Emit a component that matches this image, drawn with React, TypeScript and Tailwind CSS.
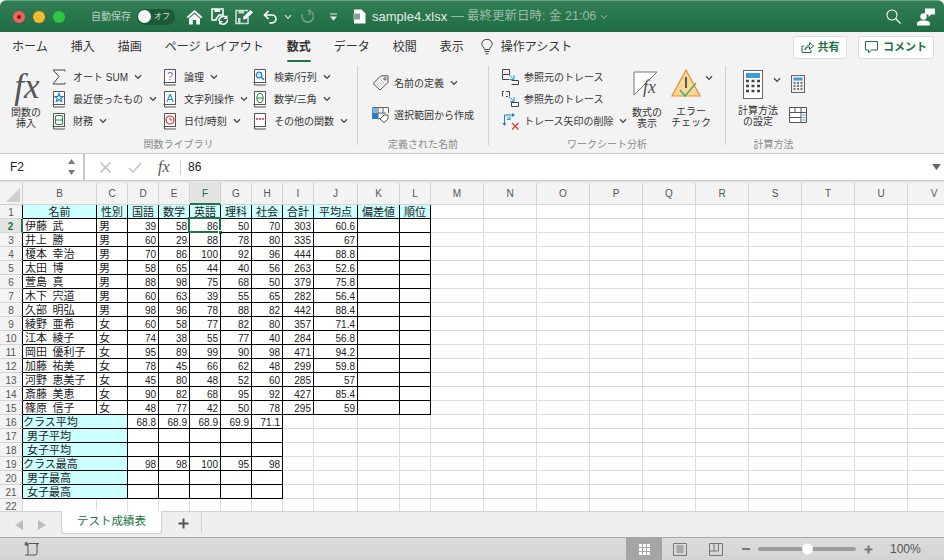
import React from "react";

const W = [23, 74, 31, 31, 31, 31, 31, 31, 31, 44, 42, 31, 53, 53, 53, 53, 53, 53, 53, 53, 53, 53];
const COLS = ["B", "C", "D", "E", "F", "G", "H", "I", "J", "K", "L", "M", "N", "O", "P", "Q", "R", "S", "T", "U", "V"];

const ROWS: (string | number)[][] = [
  ["伊藤\u2002武", "男", 39, 58, 86, 50, 70, 303, 60.6],
  ["井上\u2002勝", "男", 60, 29, 88, 78, 80, 335, 67],
  ["榎本\u2002幸治", "男", 70, 86, 100, 92, 96, 444, 88.8],
  ["太田\u2002博", "男", 58, 65, 44, 40, 56, 263, 52.6],
  ["萱島\u2002真", "男", 88, 98, 75, 68, 50, 379, 75.8],
  ["木下\u2002宍道", "男", 60, 63, 39, 55, 65, 282, 56.4],
  ["久部\u2002明弘", "男", 98, 96, 78, 88, 82, 442, 88.4],
  ["綾野\u2002亜希", "女", 60, 58, 77, 82, 80, 357, 71.4],
  ["江本\u2002綾子", "女", 74, 38, 55, 77, 40, 284, 56.8],
  ["岡田\u2002優利子", "女", 95, 89, 99, 90, 98, 471, 94.2],
  ["加藤\u2002祐美", "女", 78, 45, 66, 62, 48, 299, 59.8],
  ["河野\u2002恵美子", "女", 45, 80, 48, 52, 60, 285, 57],
  ["斎藤\u2002美恵", "女", 90, 82, 68, 95, 92, 427, 85.4],
  ["篠原\u2002信子", "女", 48, 77, 42, 50, 78, 295, 59],
];
const SUMMARY: [string, boolean, string[]][] = [
  ["クラス平均", false, ["68.8", "68.9", "68.9", "69.9", "71.1"]],
  ["男子平均", true, ["", "", "", "", ""]],
  ["女子平均", true, ["", "", "", "", ""]],
  ["クラス最高", false, ["98", "98", "100", "95", "98"]],
  ["男子最高", true, ["", "", "", "", ""]],
  ["女子最高", true, ["", "", "", "", ""]],
];
const HEADS = ["名前", "性別", "国語", "数学", "英語", "理科", "社会", "合計", "平均点", "偏差値", "順位"];

const GRID = "border-r border-b border-[#dcdcdc]";
const BLK = "border-r border-b border-black";

function Chev({ className = "" }: { className?: string }) {
  return (
    <svg width="8" height="6" viewBox="0 0 8 6" className={className}>
      <path d="M1 1.2 L4 4.4 L7 1.2" fill="none" stroke="#444" strokeWidth="1.3" />
    </svg>
  );
}

function Book({ children }: { children: React.ReactNode }) {
  return (
    <svg width="14" height="18" viewBox="0 0 14 18" className="shrink-0">
      <path d="M1.5 14.5 V1.5 H12.5 V14.5" fill="#fff" stroke="#555" strokeWidth="1" />
      <path d="M0.5 14.5 H13 M1.5 14.5 V17 H12.5 V16.5" fill="none" stroke="#555" strokeWidth="1" />
      {children}
    </svg>
  );
}

const IC = {
  sum: (
    <svg width="14" height="16" viewBox="0 0 14 16" className="shrink-0">
      <path d="M13 2.5 V1 H1 L7 7.5 L1 15 H13 V13.5" fill="none" stroke="#444" strokeWidth="1" />
    </svg>
  ),
  star: (
    <Book>
      <path d="M7 3.5 L8.1 6.4 L11.2 6.5 L8.8 8.4 L9.6 11.4 L7 9.7 L4.4 11.4 L5.2 8.4 L2.8 6.5 L5.9 6.4 Z" fill="none" stroke="#1f7fd0" strokeWidth="1.2" />
    </Book>
  ),
  fin: (
    <Book>
      <rect x="3.5" y="3.5" width="7" height="9" rx="1.5" fill="none" stroke="#2e8b4a" strokeWidth="1.2" />
      <path d="M3.5 8 H10.5" stroke="#2e8b4a" strokeWidth="1" />
    </Book>
  ),
  logic: (
    <Book>
      <text x="7" y="11.5" textAnchor="middle" fontSize="11" fill="#a04bc0" fontFamily="Liberation Sans">?</text>
    </Book>
  ),
  text: (
    <Book>
      <text x="7" y="12" textAnchor="middle" fontSize="11" fill="#1f7fd0" fontFamily="Liberation Sans">A</text>
    </Book>
  ),
  date: (
    <Book>
      <circle cx="7" cy="8" r="4" fill="none" stroke="#d8322c" strokeWidth="1.2" />
      <path d="M7 5.5 V8 H9.5" fill="none" stroke="#d8322c" strokeWidth="1" />
    </Book>
  ),
  find: (
    <Book>
      <circle cx="6" cy="7" r="2.8" fill="#cfe6f7" stroke="#1f7fd0" strokeWidth="1.2" />
      <path d="M8 9 L11 12" stroke="#1f7fd0" strokeWidth="1.4" />
    </Book>
  ),
  math: (
    <Book>
      <ellipse cx="7" cy="8" rx="3.2" ry="4.6" fill="none" stroke="#2e8b4a" strokeWidth="1.1" />
      <path d="M4 8 H10" stroke="#2e8b4a" strokeWidth="1" />
    </Book>
  ),
  more: (
    <Book>
      <path d="M3 7 H11" stroke="#d8322c" strokeWidth="1.6" strokeDasharray="2 1" />
    </Book>
  ),
};

function Item({ icon, label }: { icon: React.ReactNode; label: string }) {
  return (
    <div className="flex h-[22px] items-center">
      <span className="flex w-[14px] shrink-0 justify-center">{icon}</span>
      <span className="ml-[7px] whitespace-nowrap text-[10px] text-[#333]">{label}</span>
      <Chev className="ml-[6px]" />
    </div>
  );
}

function TraceItem({ kind, label, chev }: { kind: 0 | 1 | 2; label: string; chev?: boolean }) {
  return (
    <div className="flex h-[22px] items-center gap-[5px]">
      <Trace kind={kind} />
      <span className="whitespace-nowrap text-[10px] text-[#333]">{label}</span>
      {chev && <Chev />}
    </div>
  );
}

function Label({ children }: { children: React.ReactNode }) {
  return <div className="h-[21px] pt-[3px] text-center text-[10px] leading-[20px] text-[#8a8a8a]">{children}</div>;
}

function Sep() {
  return <div className="mt-[4px] mb-[8px] w-px shrink-0 bg-[#d0d0d0]" />;
}

function Trace({ kind }: { kind: 0 | 1 | 2 }) {
  if (kind === 2)
    return (
      <svg width="17" height="18" viewBox="0 0 17 18" className="shrink-0">
        <path d="M2.5 13 V3 H11.5" fill="none" stroke="#1f7fd0" strokeWidth="1" />
        <path d="M0.5 11 L2.5 14 L4.5 11 Z M10 1 L13 3 L10 5 Z" fill="#1f7fd0" />
        <path d="M5 4.5 L8 7.5 M8 4.5 V7.5 H5" fill="none" stroke="#1f9ad8" strokeWidth="1" />
        <path d="M10 11 L16.5 17.5 M16.5 11 L10 17.5" stroke="#e23a36" strokeWidth="1.2" />
      </svg>
    );
  return (
    <svg width="17" height="16" viewBox="0 0 17 16" className="shrink-0">
      <path d={kind === 0 ? "M0.5 0.5 H7.5 V5.5 H0.5 Z M0.5 5.5 V10.5 H7.5" : "M0.5 5.5 V0.5 H2 M4 0.5 H7.5 V5.5 M6 5.5 H4"} fill="none" stroke="#444" strokeWidth="1" />
      <path d="M9.5 11.5 H16.5 V15.5 H9.5" fill={kind === 0 ? "none" : "#fff"} stroke="#444" strokeWidth="1" />
      {kind === 1 && <path d="M9.5 11.5 V15.5" stroke="#444" strokeWidth="1" />}
      <path d="M7 6 L11 9.5" stroke="#1f9ad8" strokeWidth="1" />
      <path d="M12 6 V10.5 H8" fill="none" stroke="#1f9ad8" strokeWidth="1" />
    </svg>
  );
}

export default function App() {
  return (
    <div className="flex h-[560px] w-[944px] flex-col overflow-hidden bg-white text-[#222]" style={{ fontFamily: '"Liberation Sans", "Noto Sans CJK JP", sans-serif' }}>
      {/* title bar */}
      <div className="flex h-[32px] shrink-0 items-center rounded-t-[6px] border-t border-[#6fa78a] bg-gradient-to-b from-[#327f56] to-[#1f6b42] text-white">
        <div className="ml-[13px] flex gap-[8px]">
          <span className="flex h-[12px] w-[12px] items-center justify-center rounded-full bg-[#f6605a]"><span className="h-[4px] w-[4px] rounded-full bg-[#7d1a14]" /></span>
          <span className="h-[12px] w-[12px] rounded-full bg-[#f8b92e]" />
          <span className="h-[12px] w-[12px] rounded-full bg-[#2fc644]" />
        </div>
        <span className="ml-[26px] w-[40px] whitespace-nowrap text-[10px] text-[#b9d3c5]">自動保存</span>
        <div className="ml-[6px] flex h-[16px] w-[38px] items-center rounded-full bg-[#1d5a38]">
          <span className="ml-[1px] h-[13px] w-[13px] rounded-full bg-white" />
          <span className="ml-[3px] text-[8px] text-[#d5e3db]">オフ</span>
        </div>
        <svg width="17" height="16" viewBox="0 0 17 16" className="ml-[11px]">
          <path d="M0.5 8 L8.5 1 L16.5 8 L15 9.2 L8.5 3.6 L2 9.2 Z" fill="#fff" />
          <path d="M3 9.5 L8.5 5 L14 9.5 V15.5 H10.2 V11 H6.8 V15.5 H3 Z" fill="#fff" />
        </svg>
        <svg width="18" height="17" viewBox="0 0 18 17" className="ml-[8px]">
          <path d="M1 1 H12 V7 H8 L5 11 V12 H1 Z" fill="none" stroke="#fff" strokeWidth="1.5" />
          <path d="M3.5 1 H9 V4 H3.5 Z" fill="#fff" />
          <path d="M8 13 A4.5 4.5 0 0 1 15.5 9.5 M16.5 11.5 A4.5 4.5 0 0 1 9 15" fill="none" stroke="#fff" strokeWidth="1.5" />
          <path d="M16.5 7 V11 H12.5 Z M8 17 V13 H12 Z" fill="#fff" />
        </svg>
        <svg width="19" height="16" viewBox="0 0 19 16" className="ml-[6px]">
          <path d="M13 8 V14.5 H1 V1.5 H13" fill="none" stroke="#c9ddd2" strokeWidth="1.6" />
          <path d="M3.5 1.5 H9 V4.5 H3.5 Z M3 9 H5.5 V14 H3 Z" fill="#c9ddd2" />
          <path d="M8 10.5 L8.5 7.5 L15.5 1 L18 3.5 L11 10 Z" fill="#fff" />
        </svg>
        <svg width="14" height="14" viewBox="0 0 14 14" className="ml-[9px]">
          <path d="M5.5 1 L1.5 5 L5.5 9" fill="none" stroke="#fff" strokeWidth="1.7" />
          <path d="M2 5 H9 A3.8 3.8 0 0 1 9 12.8 H6.5" fill="none" stroke="#fff" strokeWidth="1.7" />
        </svg>
        <svg width="8" height="6" viewBox="0 0 8 6" className="ml-[7px]">
          <path d="M1 1.2 L4 4.4 L7 1.2" fill="none" stroke="#d7e5dd" strokeWidth="1.2" />
        </svg>
        <svg width="14" height="15" viewBox="0 0 14 15" className="ml-[8px]">
          <path d="M7.5 1.5 A5.8 5.8 0 1 1 2.5 5" fill="none" stroke="#6a9f82" strokeWidth="1.7" />
          <path d="M9.5 0.5 V6" stroke="#6a9f82" strokeWidth="1.7" />
        </svg>
        <svg width="9" height="8" viewBox="0 0 9 8" className="ml-[15px]">
          <path d="M1 1 H8" stroke="#e8f0ec" strokeWidth="1" />
          <path d="M1 3.5 H8 L4.5 7.5 Z" fill="#e8f0ec" />
        </svg>
        <svg width="13" height="15" viewBox="0 0 13 15" className="ml-[15px]">
          <path d="M1 0.5 H8.5 L12.5 4.5 V14.5 H1 Z" fill="#fff" />
          <rect x="0" y="4.5" width="7" height="6" fill="#7ea892" />
        </svg>
        <span className="ml-[6px] whitespace-nowrap text-[13px] text-[#e4eee9]">sample4.xlsx</span>
        <span className="ml-[4px] whitespace-nowrap text-[12.5px] text-[#98bda9]">— 最終更新日時: 金 21:06</span>
        <svg width="8" height="6" viewBox="0 0 8 6" className="ml-[4px]">
          <path d="M1 1.2 L4 4.4 L7 1.2" fill="none" stroke="#98bda9" strokeWidth="1" />
        </svg>
        <div className="flex-1" />
        <svg width="15" height="15" viewBox="0 0 15 15" className="mr-[16px]">
          <circle cx="6" cy="6" r="5" fill="none" stroke="#fff" strokeWidth="1.1" />
          <path d="M9.5 9.5 L14.5 14.5" stroke="#fff" strokeWidth="1.2" />
        </svg>
        <svg width="18" height="18" viewBox="0 0 18 18" className="mr-[9px]">
          <path d="M8 0.5 H18 V6.5 H14 L11.5 9 V6.5 H8 Z" fill="#fff" />
          <circle cx="6.5" cy="8.5" r="3.2" fill="#fff" />
          <path d="M0 17.5 V15.5 C0 13 3.5 12.5 6.5 12.5 C9.5 12.5 13 13 13 15.5 V17.5 Z" fill="#fff" />
        </svg>
      </div>

      {/* tabs */}
      <div className="flex h-[30px] shrink-0 items-center gap-[23px] bg-[#f3f3f3] pr-[10px] pl-[12px] text-[12px] text-[#333]">
        <span>ホーム</span>
        <span>挿入</span>
        <span>描画</span>
        <span className="whitespace-nowrap">ページ レイアウト</span>
        <span className="relative font-bold">
          数式
          <span className="absolute -bottom-[6px] left-0 h-[2px] w-full rounded-full bg-[#217346]" />
        </span>
        <span>データ</span>
        <span>校閲</span>
        <span>表示</span>
        <span className="-ml-[6px] flex items-center gap-[8px]">
          <svg width="12" height="16" viewBox="0 0 12 16">
            <path d="M3.5 10.5 C3.5 8.5 0.8 7.5 0.8 4.8 A5.2 4.5 0 0 1 11.2 4.8 C11.2 7.5 8.5 8.5 8.5 10.5 Z M3.5 12.5 H8.5 M4.5 14.8 H7.5" fill="none" stroke="#444" strokeWidth="1" />
          </svg>
          <span className="whitespace-nowrap">操作アシスト</span>
        </span>
        <div className="flex-1" />
        <div className="flex gap-[11px] text-[11px] font-bold text-[#217346]">
          <div className="flex h-[23px] w-[54px] items-center justify-center gap-[4px] rounded-[3px] border border-[#dcdcdc] bg-white">
            <svg width="13" height="12" viewBox="0 0 13 12">
              <path d="M3 5 H1 V11.5 H10 V9" fill="none" stroke="#217346" strokeWidth="1" />
              <path d="M4 9 C4 5.5 6.5 4.2 8.5 4.2 V1.5 L12.5 5 L8.5 8.5 V6 C6.5 6 5 7 4 9 Z" fill="none" stroke="#217346" strokeWidth="1" />
            </svg>
            共有
          </div>
          <div className="flex h-[23px] w-[76px] items-center justify-center gap-[5px] rounded-[3px] border border-[#dcdcdc] bg-white">
            <svg width="13" height="13" viewBox="0 0 13 13">
              <path d="M0.5 0.5 H12.5 V9 H6.5 L3.5 12 V9 H0.5 Z" fill="none" stroke="#217346" strokeWidth="1" />
            </svg>
            コメント
          </div>
        </div>
      </div>

      {/* ribbon */}
      <div className="flex h-[92px] shrink-0 border-b border-[#c8c8c8] bg-[#f3f3f3] text-[#333]">
        <div className="flex w-[357px] shrink-0 flex-col">
          <div className="flex h-[70px] pt-[4px]">
            <div className="flex w-[52px] shrink-0 flex-col items-center">
              <div className="mt-[1px] h-[39px] pl-[2px] text-[35px] leading-[39px] text-[#555]" style={{ fontFamily: '"Liberation Serif", serif', fontStyle: "italic" }}>fx</div>
              <div className="mt-[1px] text-center text-[10px] leading-[11px]">関数の<br />挿入</div>
            </div>
            <div className="flex w-[111px] shrink-0 flex-col">
              <Item icon={IC.sum} label="オート SUM" />
              <Item icon={IC.star} label="最近使ったもの" />
              <Item icon={IC.fin} label="財務" />
            </div>
            <div className="flex w-[90px] shrink-0 flex-col">
              <Item icon={IC.logic} label="論理" />
              <Item icon={IC.text} label="文字列操作" />
              <Item icon={IC.date} label="日付/時刻" />
            </div>
            <div className="flex flex-col">
              <Item icon={IC.find} label="検索/行列" />
              <Item icon={IC.math} label="数学/三角" />
              <Item icon={IC.more} label="その他の関数" />
            </div>
          </div>
          <Label>関数ライブラリ</Label>
        </div>
        <Sep />
        <div className="flex w-[130px] shrink-0 flex-col">
          <div className="flex h-[70px] flex-col gap-[10px] pt-[10px] pl-[14px]">
            <div className="flex h-[22px] items-center">
              <svg width="17" height="16" viewBox="0 0 17 16" className="shrink-0">
                <path d="M1 8.5 L9 0.8 H16 V7.5 L8 15 Z" fill="none" stroke="#555" strokeWidth="1" />
                <circle cx="13" cy="3.8" r="1.2" fill="none" stroke="#555" />
                <path d="M4.5 8.5 L8 12 M6.5 6.5 L10 10 M8.5 4.5 L12 8" stroke="#aaa" strokeWidth="0.8" />
              </svg>
              <span className="ml-[5px] whitespace-nowrap text-[10px]">名前の定義</span>
              <Chev className="ml-[6px]" />
            </div>
            <div className="flex h-[22px] items-center">
              <svg width="17" height="16" viewBox="0 0 17 16" className="shrink-0">
                <path d="M0.5 0.5 H16.5 V6 M0.5 0.5 V11.5 H8 M0.5 6 H14 M6 0.5 V11 M11 0.5 V6" fill="none" stroke="#666" strokeWidth="1" />
                <rect x="0.5" y="6" width="5.5" height="6" fill="#1f7fd0" />
                <rect x="0.5" y="1" width="5.5" height="4.5" fill="#7ab6e6" />
                <path d="M8 12 L12 8 H16 V12 L12 15.5 Z" fill="#fff" stroke="#555" strokeWidth="1" />
              </svg>
              <span className="ml-[5px] whitespace-nowrap text-[10px]">選択範囲から作成</span>
            </div>
          </div>
          <Label>定義された名前</Label>
        </div>
        <Sep />
        <div className="flex w-[236px] shrink-0 flex-col">
          <div className="flex h-[70px] pt-[4px] pl-[13px]">
            <div className="flex w-[130px] shrink-0 flex-col">
              <TraceItem kind={0} label="参照元のトレース" />
              <TraceItem kind={1} label="参照先のトレース" />
              <TraceItem kind={2} label="トレース矢印の削除" chev />
            </div>
            <div className="flex w-[30px] shrink-0 flex-col items-center pt-[4px]">
              <svg width="28" height="26" viewBox="0 0 28 26" className="mt-[1px] shrink-0">
                <path d="M1 24 V1 H24 Z" fill="#fff" stroke="#777" strokeWidth="1" />
                <text x="10" y="22" fontSize="18" fontStyle="italic" fontFamily="Liberation Serif" fill="#555">fx</text>
              </svg>
              <div className="mt-[10px] text-center text-[10px] leading-[11px] whitespace-nowrap">数式の<br />表示</div>
            </div>
            <div className="ml-[9px] flex w-[42px] shrink-0 flex-col items-center pt-[4px]">
              <div className="flex">
                <svg width="30" height="30" viewBox="0 0 30 30" className="-mt-[1px] shrink-0">
                  <path d="M15 1 L29 27 H1 Z" fill="#fbd79a" stroke="#ee8a2e" strokeWidth="1.2" />
                  <path d="M15 8 V19" stroke="#555" strokeWidth="2" />
                  <path d="M9 21 L14 27 L25 14" fill="none" stroke="#48b56c" strokeWidth="1.6" />
                </svg>
                <Chev className="mt-[5px] ml-[4px]" />
              </div>
              <div className="mt-[7px] -ml-[2px] text-center text-[10px] leading-[11px] whitespace-nowrap">エラー<br />チェック</div>
            </div>
          </div>
          <Label>ワークシート分析</Label>
        </div>
        <Sep />
        <div className="flex w-[95px] shrink-0 flex-col">
          <div className="flex h-[70px] pt-[8px]">
            <div className="flex w-[60px] shrink-0 flex-col items-center pl-[4px]">
              <div className="flex items-start">
                <svg width="20" height="29" viewBox="0 0 20 29" className="ml-[8px] shrink-0">
                  <rect x="0.5" y="0.5" width="19" height="28" fill="#fff" stroke="#666" />
                  <rect x="3" y="3" width="14" height="5" fill="#3f9ad8" />
                  <path d="M3 11 H17 M3 16 H17 M3 21 H17" stroke="#444" strokeWidth="2.4" strokeDasharray="3 2.5" />
                </svg>
                <Chev className="mt-[7px] ml-[10px]" />
              </div>
              <div className="mt-[6px] text-center text-[10px] leading-[11px] whitespace-nowrap">計算方法<br />の設定</div>
            </div>
            <div className="flex flex-col">
              <svg width="14" height="18" viewBox="0 0 14 18" className="mt-[5px] ml-[5px] shrink-0">
                <rect x="0.5" y="0.5" width="13" height="17" fill="#eee" stroke="#666" />
                <rect x="2.5" y="2.5" width="9" height="3" fill="#3f9ad8" />
                <path d="M2.5 8 H11.5 M2.5 11 H11.5 M2.5 14 H11.5" stroke="#555" strokeWidth="1.6" strokeDasharray="2 1.5" />
              </svg>
              <svg width="18" height="16" viewBox="0 0 18 16" className="mt-[14px] ml-[3px] shrink-0">
                <path d="M0.5 0.5 H17.5 V15.5 H0.5 Z M0.5 5.5 H17.5 M6 0.5 V5.5 M12 0.5 V15.5 M0.5 10.5 H12" fill="#fff" stroke="#555" strokeWidth="1" />
                <path d="M13.5 8 H16.5 M13.5 10.5 H16.5 M13.5 13 H16.5" stroke="#3f9ad8" strokeWidth="1" />
              </svg>
            </div>
          </div>
          <Label>計算方法</Label>
        </div>
      </div>

      {/* formula bar */}
      <div className="flex h-[27px] shrink-0 items-stretch bg-[#f5f5f5]">
        <div className="flex w-[85px] shrink-0 items-center justify-between border-r-2 border-b border-[#c8c8c8] bg-white pr-[7px] pl-[10px] text-[12px]">
          <span>F2</span>
          <svg width="9" height="18" viewBox="0 0 9 18">
            <path d="M4.5 1 L8 6 H1 Z M1 12 H8 L4.5 17 Z" fill="#777" />
          </svg>
        </div>
        <div className="flex flex-1 items-center border-b border-[#c8c8c8] bg-white">
          <svg width="11" height="11" viewBox="0 0 11 11" className="ml-[15px]">
            <path d="M0.5 0.5 L10.5 10.5 M10.5 0.5 L0.5 10.5" stroke="#c4c4c4" strokeWidth="1.6" />
          </svg>
          <svg width="14" height="11" viewBox="0 0 14 11" className="ml-[17px]">
            <path d="M1 6 L5 10 L13 1" fill="none" stroke="#c4c4c4" strokeWidth="1.6" />
          </svg>
          <span className="ml-[16px] w-[20px] text-[16px] leading-none text-[#555]" style={{ fontFamily: '"Liberation Serif", serif', fontStyle: "italic" }}>fx</span>
          <span className="ml-[2px] h-[15px] w-px bg-[#d0d0d0]" />
          <span className="ml-[7px] text-[12px]">86</span>
          <div className="flex-1" />
          <svg width="9" height="6" viewBox="0 0 9 6" className="mr-[3px]">
            <path d="M0 0 H9 L4.5 6 Z" fill="#666" />
          </svg>
        </div>
      </div>
      <div className="h-[2px] shrink-0 bg-[#e6e6e6]" />

      {/* sheet */}
      <div
        className="grid h-[328px] shrink-0 grid-cols-[23px_74px_31px_31px_31px_31px_31px_31px_31px_44px_42px_31px_53px_53px_53px_53px_53px_53px_53px_53px_53px_53px] grid-rows-[22px_repeat(22,14px)] overflow-hidden text-[10px] leading-[15px]"
        style={{ width: W.reduce((a, b) => a + b, 0) }}
      >
        {/* column headers */}
        <div className="relative border-r border-b border-[#cfcfcf] bg-[#f3f3f3]">
          <div className="absolute right-[2px] bottom-[2px] h-0 w-0 border-b-[14px] border-l-[14px] border-b-[#d0d0d0] border-l-transparent" />
        </div>
        {COLS.map((c) =>
          c === "F" ? (
            <div key={c} className="flex items-center justify-center border-r border-b-2 border-r-[#cfcfcf] border-b-[#217346] bg-[#e3e3e3] text-[10px] text-[#217346]">{c}</div>
          ) : (
            <div key={c} className="flex items-center justify-center border-r border-b border-[#d4d4d4] bg-[#f3f3f3] text-[10px] text-[#555]">{c}</div>
          ),
        )}

        {/* row 1 */}
        <RowNum n={1} />
        {HEADS.map((h) => (
          <div key={h} className={`${BLK} bg-[#ccffff] text-center text-[11px]`}>{h}</div>
        ))}
        <Blank n={10} />

        {/* rows 2 to 15 */}
        {ROWS.map((r, i) => (
          <React.Fragment key={i}>
            <RowNum n={i + 2} />
            {r.map((v, j) => (
              <div
                key={j}
                className={`${BLK} relative overflow-visible ${j < 2 ? "pl-[2px] text-[11px] whitespace-nowrap" : "pr-[2px] text-right"}`}
              >
                {v}
                {i === 0 && j === 4 && (
                  <>
                    <span className="absolute -top-[2px] -left-[2px] h-[16px] w-[33px] border-2 border-[#217346]" />
                    <span className="absolute -right-[3px] -bottom-[3px] h-[5px] w-[5px] border border-white bg-[#217346]" />
                  </>
                )}
              </div>
            ))}
            <div className={BLK} />
            <div className={BLK} />
            <Blank n={10} />
          </React.Fragment>
        ))}

        {/* rows 16 to 21 */}
        {SUMMARY.map(([name, indent, vals], i) => (
          <React.Fragment key={name}>
            <RowNum n={i + 16} />
            <div className={`${BLK} col-span-2 bg-[#ccffff] text-[11px] ${indent ? "pl-[4px]" : ""}`}>{name}</div>
            {vals.map((v, j) => (
              <div key={j} className={`${BLK} pr-[2px] text-right`}>{v}</div>
            ))}
            <Blank n={14} />
          </React.Fragment>
        ))}

        {/* row 22 */}
        <RowNum n={22} plain />
        <Blank n={21} />
      </div>

      {/* sheet tabs */}
      <div className="flex h-[26px] shrink-0 items-start border-t border-[#cfcfcf] bg-[#efefef]">
        <svg width="8" height="10" viewBox="0 0 8 10" className="mt-[8px] ml-[15px]"><path d="M8 0 V10 L0 5 Z" fill="#bdbdbd" /></svg>
        <svg width="8" height="10" viewBox="0 0 8 10" className="mt-[8px] ml-[15px]"><path d="M0 0 V10 L8 5 Z" fill="#bdbdbd" /></svg>
        <div className="-mt-px ml-[15px] flex h-[23px] w-[101px] items-center justify-center rounded-b-[4px] border-x border-b border-[#cfcfcf] bg-white text-[11.5px] text-[#217346]">テスト成績表</div>
        <svg width="11" height="11" viewBox="0 0 11 11" className="mt-[6px] ml-[16px]"><path d="M5.5 0.5 V10.5 M0.5 5.5 H10.5" stroke="#555" strokeWidth="2" /></svg>
        <div className="-mt-px ml-[12px] h-[21px] w-px bg-[#cfcfcf]" />
      </div>

      {/* status bar */}
      <div className="flex h-[22px] flex-1 items-center border-t border-[#a8a8a8] bg-gradient-to-b from-[#dcdcdc] to-[#d4d4d4]">
        <svg width="16" height="14" viewBox="0 0 16 14" className="ml-[24px]">
          <circle cx="2.5" cy="2" r="2" fill="#666" />
          <path d="M5 1.5 H15 M13 1.5 V11 A2 2 0 0 1 11 13 H1 M4 2 V13 M13 1.5 L13 4" fill="none" stroke="#555" strokeWidth="1" />
        </svg>
        <div className="flex-1" />
        <div className="flex h-full w-[36px] items-center justify-center bg-[#a5a5a5]">
          <svg width="13" height="13" viewBox="0 0 13 13">
            <path d="M0.5 0.5 H12.5 V12.5 H0.5 Z M4.5 0.5 V12.5 M8.5 0.5 V12.5 M0.5 4.5 H12.5 M0.5 8.5 H12.5" fill="#fff" stroke="#a5a5a5" strokeWidth="1" />
          </svg>
        </div>
        <div className="flex h-full w-[36px] items-center justify-center">
          <svg width="14" height="13" viewBox="0 0 14 13">
            <path d="M0.5 0.5 H13.5 V12.5 H0.5 Z" fill="none" stroke="#777" strokeWidth="1" />
            <path d="M3.5 3 H10.5 M3.5 5 H10.5 M3.5 7 H10.5 M3.5 9 H10.5" stroke="#777" strokeWidth="1" />
          </svg>
        </div>
        <div className="flex h-full w-[36px] items-center justify-center">
          <svg width="14" height="13" viewBox="0 0 14 13">
            <path d="M0.5 0.5 H13.5 V12.5 H0.5 Z M0.5 8 H9.5 M5 0.5 V8 M9.5 0.5 V8" fill="none" stroke="#777" strokeWidth="1" />
          </svg>
        </div>
        <div className="ml-[8px] h-[2px] w-[8px] bg-[#777]" />
        <div className="relative ml-[8px] h-[4px] w-[98px] rounded-full bg-[#9c9c9c]">
          <span className="absolute top-1/2 left-[44px] h-[11px] w-[11px] -translate-y-1/2 rounded-full bg-white" />
        </div>
        <svg width="9" height="9" viewBox="0 0 9 9" className="ml-[8px]"><path d="M4.5 0.5 V8.5 M0.5 4.5 H8.5" stroke="#777" strokeWidth="2" /></svg>
        <span className="ml-[17px] w-[33px] text-[12px] text-[#555]">100%</span>
        <div className="w-[21px]" />
      </div>
    </div>
  );
}

function RowNum({ n, plain }: { n: number; plain?: boolean }) {
  const active = n === 2;
  return (
    <div
      className={`flex items-center justify-center border-b pt-[2px] text-[10px] ${
        active
          ? "border-r-2 border-r-[#217346] border-b-[#d4d4d4] bg-[#e3e3e3] font-bold text-[#217346]"
          : `border-r border-b-[#d4d4d4] bg-[#f3f3f3] text-[#555] ${plain ? "border-r-[#d4d4d4]" : "border-r-black"}`
      }`}
    >
      {n}
    </div>
  );
}

function Blank({ n }: { n: number }) {
  return (
    <>
      {Array.from({ length: n }).map((_, i) => (
        <div key={i} className={GRID} />
      ))}
    </>
  );
}
